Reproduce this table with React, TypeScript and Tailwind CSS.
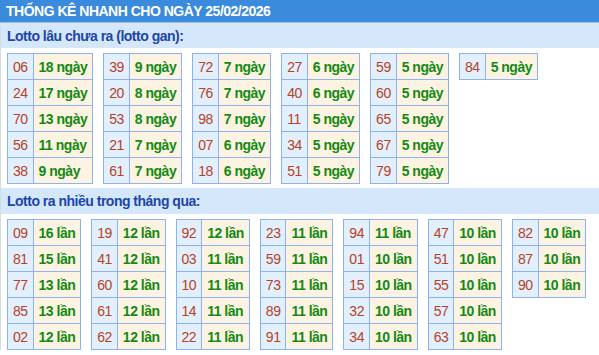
import React from "react";

type Row = [string, number];

const gan: Row[][] = [
  [["06", 18], ["24", 17], ["70", 13], ["56", 11], ["38", 9]],
  [["39", 9], ["20", 8], ["53", 8], ["21", 7], ["61", 7]],
  [["72", 7], ["76", 7], ["98", 7], ["07", 6], ["18", 6]],
  [["27", 6], ["40", 6], ["11", 5], ["34", 5], ["51", 5]],
  [["59", 5], ["60", 5], ["65", 5], ["67", 5], ["79", 5]],
  [["84", 5]],
];

const nhieu: Row[][] = [
  [["09", 16], ["81", 15], ["77", 13], ["85", 13], ["02", 12]],
  [["19", 12], ["41", 12], ["60", 12], ["61", 12], ["62", 12]],
  [["92", 12], ["03", 11], ["10", 11], ["14", 11], ["22", 11]],
  [["23", 11], ["59", 11], ["73", 11], ["89", 11], ["91", 11]],
  [["94", 11], ["01", 10], ["15", 10], ["32", 10], ["34", 10]],
  [["47", 10], ["51", 10], ["55", 10], ["57", 10], ["63", 10]],
  [["82", 10], ["87", 10], ["90", 10]],
];

function Box({ rows, unit }: { rows: Row[]; unit: string }) {
  return (
    <div className="grid grid-cols-[auto_auto] self-start border-l border-t border-[#8db2ef]">
      {rows.map(([n, v]) => (
        <React.Fragment key={n}>
          <div className="h-[26px] flex items-center px-[5px] border-r border-b border-[#8db2ef] bg-[#e2effd] text-[#b7421f]">
            {n}
          </div>
          <div className="h-[26px] flex items-center pl-[5px] pr-[5px] border-r border-b border-[#8db2ef] bg-[#fdf3e2] text-[#148a14] font-bold">
            {v} {unit}
          </div>
        </React.Fragment>
      ))}
    </div>
  );
}

export default function App() {
  return (
    <div
      className="w-[599px] h-[355px] overflow-hidden bg-white text-[14px] tracking-[-0.5px] leading-none whitespace-nowrap"
      style={{ fontFamily: '"Liberation Sans", Arial, sans-serif' }}
    >
      <div className="h-[22px] bg-[#3b8bdd] text-white font-bold flex items-center pl-[6px] border-b border-[#a9bfd6] box-content">
        THỐNG KÊ NHANH CHO NGÀY 25/02/2026
      </div>
      <div className="border-l border-[#d3dbe5]">
        <div className="h-[25px] bg-[#d5e8fb] text-[#1d46a6] font-bold flex items-center pl-[6px]">
          Lotto lâu chưa ra (lotto gan):
        </div>
        <div className="flex gap-[10px] pl-[6px] pt-[5px] h-[140px]">
          {gan.map((t, i) => (
            <Box key={i} rows={t} unit="ngày" />
          ))}
        </div>
        <div className="h-[26px] bg-[#d5e8fb] text-[#1d46a6] font-bold flex items-center pl-[6px]">
          Lotto ra nhiều trong tháng qua:
        </div>
        <div className="flex gap-[10px] pl-[6px] pt-[5px]">
          {nhieu.map((t, i) => (
            <Box key={i} rows={t} unit="lần" />
          ))}
        </div>
      </div>
    </div>
  );
}
